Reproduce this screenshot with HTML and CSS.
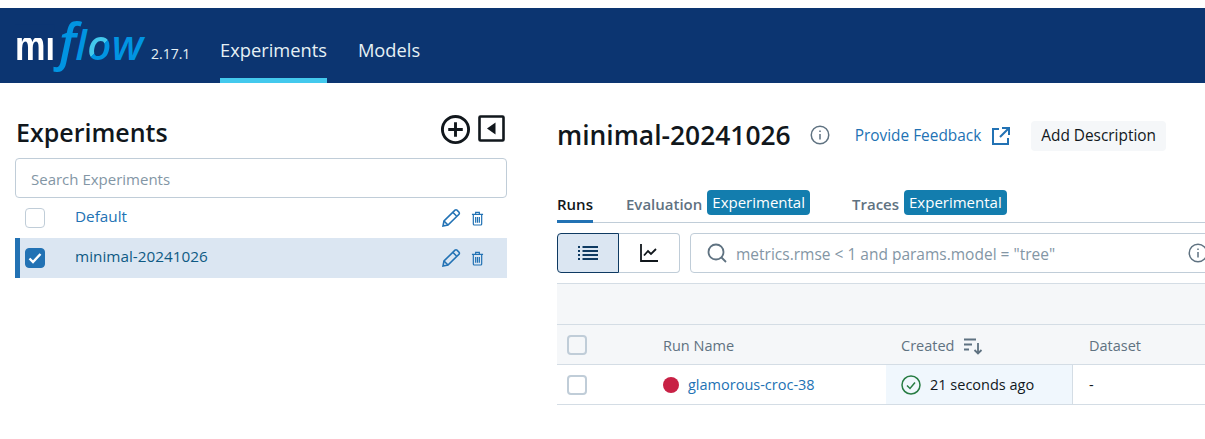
FILE: index.html
```html
<!DOCTYPE html>
<html lang="en">
<head>
  <meta charset="UTF-8" />
  <title>MLflow</title>
  <link rel="stylesheet" href="styles.css">
</head>
<body>
  <header class="topbar">
    <div class="logo">
      <span class="logo-ml">ml</span>
      <span class="logo-flow"><span class="logo-f">f</span>l<span class="logo-o">o</span>w</span>
    </div>
    <span class="version">2.17.1</span>
    <nav class="topnav">
      <a class="topnav-item active">Experiments</a>
      <a class="topnav-item">Models</a>
    </nav>
  </header>

  <div class="page">
    <aside class="sidebar">
      <div class="sidebar-head">
        <h2>Experiments</h2>
        <div class="sidebar-tools">
          <svg width="31" height="31" viewBox="0 0 32 32" fill="none" stroke="#11171c" stroke-width="3"><circle cx="16" cy="16" r="13.5"/><path d="M16 8.500v15M8.500 16h15"/></svg>
          <svg width="28" height="28" viewBox="0 0 28 28"><rect x="1.500" y="1.500" width="24" height="24" rx="1" fill="none" stroke="#11171c" stroke-width="2.600"/><path d="M17.500 7.500v12L9 13.500z" fill="#11171c"/></svg>
        </div>
      </div>
      <div class="search">Search Experiments</div>
      <div class="exp-row">
        <span class="check"></span>
        <span class="exp-name">Default</span>
        <svg class="pencil" width="20" height="20" viewBox="0 0 20 20" fill="none" stroke="#2272b4" stroke-width="1.600"><path d="M2 18l1-5L14 2.200q1-.8 2 0l2 2q.8 1 0 2L7 17z"/><path d="M12 4.500l3.500 3.500M3 13l4 4"/></svg>
        <svg class="trash" width="13" height="15" viewBox="0 0 14 16" fill="none" stroke="#2272b4" stroke-width="1.300"><path d="M1 3.500h12M5 3.500V1.500h4v2M2.500 3.500v10.500q0 1 1 1h7q1 0 1-1V3.500M5 6.500v6M7 6.500v6M9 6.500v6"/></svg>
      </div>
      <div class="exp-row selected">
        <span class="check checked"><svg width="14" height="12" viewBox="0 0 14 12" fill="none" stroke="#fff" stroke-width="2.400"><path d="M1.500 6.500l3.500 3.500 7.500-8"/></svg></span>
        <span class="exp-name">minimal-20241026</span>
        <svg class="pencil" width="20" height="20" viewBox="0 0 20 20" fill="none" stroke="#2272b4" stroke-width="1.600"><path d="M2 18l1-5L14 2.200q1-.8 2 0l2 2q.8 1 0 2L7 17z"/><path d="M12 4.500l3.500 3.500M3 13l4 4"/></svg>
        <svg class="trash" width="13" height="15" viewBox="0 0 14 16" fill="none" stroke="#2272b4" stroke-width="1.300"><path d="M1 3.500h12M5 3.500V1.500h4v2M2.500 3.500v10.500q0 1 1 1h7q1 0 1-1V3.500M5 6.500v6M7 6.500v6M9 6.500v6"/></svg>
      </div>
    </aside>

    <main class="content">
      <div class="title-row">
        <h1>minimal-20241026</h1>
        <svg class="info" width="20" height="20" viewBox="0 0 20 20" fill="none" stroke="#5f7281" stroke-width="1.500"><circle cx="10" cy="10" r="8.750"/><path d="M10 9v5.500M10 5.500v1.600"/></svg>
        <a class="feedback">Provide Feedback</a>
        <svg class="ext" width="20" height="20" viewBox="0 0 20 20" fill="none" stroke="#2272b4" stroke-width="2"><path d="M8 3H2v15h15v-6M11 2h7v7M18 2L9 11"/></svg>
        <span class="add-desc">Add Description</span>
      </div>

      <div class="tabs">
        <span class="tab active">Runs</span>
        <span class="tab tab-eval">Evaluation <b class="tag">Experimental</b></span>
        <span class="tab tab-traces">Traces <b class="tag">Experimental</b></span>
      </div>

      <div class="toolbar">
        <div class="switch">
          <span class="switch-btn on"><svg width="20" height="16" viewBox="0 0 20 16" stroke="#0e3a62" stroke-width="2"><path d="M4.500 2H20M4.500 6H20M4.500 10H20M4.500 14H20M0 2h2M0 6h2M0 10h2M0 14h2"/></svg></span>
          <span class="switch-btn"><svg width="18" height="18" viewBox="0 0 18 18" fill="none" stroke="#11171c" stroke-width="1.800"><path d="M1 0v17h17M4 11.500l4-4.500 3 3 5-5"/></svg></span>
        </div>
        <div class="filter">
          <svg width="20" height="20" viewBox="0 0 20 20" fill="none" stroke="#5f7281" stroke-width="1.800"><circle cx="9" cy="9" r="7.500"/><path d="M14.500 14.500l4.500 4.500"/></svg>
          <span class="filter-text">metrics.rmse &lt; 1 and params.model = "tree"</span>
          <svg class="filter-info" width="20" height="20" viewBox="0 0 20 20" fill="none" stroke="#5f7281" stroke-width="1.500"><circle cx="10" cy="10" r="8.750"/><path d="M10 9v5.500M10 5.500v1.600"/></svg>
        </div>
      </div>

      <div class="table">
        <div class="table-band"></div>
        <div class="tr head">
          <span class="td c-check"><span class="check gray"></span></span>
          <span class="td c-name">Run Name</span>
          <span class="td c-created">Created
            <svg width="20" height="18" viewBox="0 0 20 18" fill="none" stroke="#5f7281" stroke-width="1.800"><path d="M1 2.500h12M1 7.500h8M1 12.500h5M15 6v10.500M11.500 13l3.500 3.500 3.500-3.500"/></svg>
          </span>
          <span class="td c-data">Dataset</span>
        </div>
        <div class="tr">
          <span class="td c-check"><span class="check gray"></span></span>
          <span class="td c-name"><i class="dot"></i><a class="run-link">glamorous-croc-38</a></span>
          <span class="td c-created cell-hl">
            <svg width="20" height="20" viewBox="0 0 20 20" fill="none" stroke="#277c43" stroke-width="1.500"><circle cx="10" cy="10" r="9"/><path d="M6 10.500l3 3 5-6"/></svg>
            <span class="ago">21 seconds ago</span>
          </span>
          <span class="td c-data val">-</span>
        </div>
      </div>
    </main>
  </div>
</body>
</html>
```

FILE: styles.css
```css
* {
  box-sizing: border-box;
  margin: 0;
  padding: 0;
}

html, body {
  height: 100%;
  overflow: hidden;
  background: #fff;
  font-family: "Open Sans", "Noto Sans", sans-serif;
  font-size: 15px;
  color: #11171c;
}

body {
  padding-top: 8px;
}

/* top bar */
.topbar {
  display: flex;
  align-items: center;
  height: 75px;
  padding-left: 15px;
  background: #0c3571;
  color: #e6f1f5;
}

.logo {
  display: flex;
  align-items: flex-start;
  width: 131px;
  height: 75px;
}

.logo-ml {
  position: relative;
  display: block;
  flex: none;
  width: 44px;
  height: 21px;
  margin-top: 30px;
  line-height: 15px;
  font-family: "Liberation Sans", sans-serif;
  font-weight: 700;
  font-size: 38px;
  color: #fff;
  transform: scale(.9, 1.12);
  transform-origin: top left;
}

/* the logo's l is no taller than its m */
.logo-ml::after {
  content: "";
  position: absolute;
  left: 0;
  right: 0;
  bottom: 100%;
  height: 12px;
  background: #0c3571;
}

.logo-flow {
  display: block;
  flex: none;
  height: 75px;
  line-height: 67px;
  font-family: "Open Sans", sans-serif;
  font-style: italic;
  font-weight: 600;
  font-size: 42px;
  letter-spacing: .5px;
  color: #0194e2;
}

.logo-f {
  font-size: 50px;
  letter-spacing: -1px;
}

.logo-o {
  background: linear-gradient(135deg, #43c9ed 55%, #0194e2 55%);
  -webkit-background-clip: text;
  background-clip: text;
  color: transparent;
}

.version {
  width: 74px;
  padding-top: 15px;
  padding-left: 5px;
  font-size: 14px;
}

.topnav {
  display: flex;
  height: 75px;
  gap: 31px;
}

.topnav-item {
  display: flex;
  align-items: center;
  padding-top: 12px;
  border-bottom: 5px solid transparent;
  font-size: 18.300px;
}

.topnav-item.active {
  border-bottom-color: #43c9ed;
}

.page {
  display: flex;
  gap: 50px;
  padding-left: 15px;
}

/* left column */
.sidebar {
  flex: 0 0 492px;
  padding-top: 30px;
}

.sidebar-head {
  display: flex;
  justify-content: space-between;
  align-items: center;
  height: 45px;
  padding-left: 1px;
  padding-right: 1px;
}

.sidebar-head h2 {
  margin-bottom: 7px;
  font-size: 25px;
  font-weight: 600;
}

.sidebar-tools {
  display: flex;
  align-items: center;
  gap: 7px;
  margin-bottom: 13px;
}

.search {
  display: flex;
  align-items: center;
  height: 40px;
  padding-top: 1px;
  padding-left: 15px;
  border: 1px solid #c0cdd8;
  border-radius: 4px;
  font-size: 15px;
  color: #8396a5;
}

.exp-row {
  display: flex;
  align-items: center;
  height: 40px;
  padding-left: 10px;
  color: #2272b4;
}

.exp-row.selected {
  padding-left: 5px;
  border-left: 5px solid #2272b4;
  background: #dbe6f2;
}

.exp-row .exp-name {
  flex: 1;
  margin-left: 30px;
  padding-bottom: 4px;
  font-size: 15.300px;
}

.exp-row.selected .exp-name {
  color: #0e5a84;
}

.check {
  display: inline-flex;
  align-items: center;
  justify-content: center;
  width: 20px;
  height: 20px;
  border: 1px solid #c0cdd8;
  border-radius: 4px;
  background: #fff;
}

.check.checked {
  border-color: #2272b4;
  background: #2272b4;
}

.check.gray {
  border-width: 2px;
  background: transparent;
}

.pencil {
  margin-right: 10px;
}

.trash {
  margin-right: 23px;
}

/* main column */
.content {
  flex: 1;
  min-width: 0;
  overflow: hidden;
  padding-top: 30px;
}

.title-row {
  display: flex;
  align-items: center;
  height: 45px;
}

.title-row h1 {
  padding-bottom: 2px;
  font-size: 26.400px;
  font-weight: 600;
}

.info {
  margin-left: 19px;
  margin-bottom: 2px;
}

.feedback {
  margin-left: 25px;
  font-size: 15.400px;
  color: #2272b4;
}

.ext {
  margin-left: 10px;
}

.add-desc {
  display: flex;
  align-items: center;
  height: 30px;
  margin-left: 20px;
  padding: 0 10px;
  border-radius: 4px;
  background: #f5f7f9;
  font-size: 15.400px;
}

.tabs {
  display: flex;
  align-items: center;
  height: 43px;
  margin-top: 22px;
  border-bottom: 1px solid #c0cdd8;
}

.tab {
  display: flex;
  align-items: center;
  height: 43px;
  padding-top: 6px;
  font-weight: 600;
  font-size: 15px;
  color: #5f7281;
}

.tab.active {
  width: 36px;
  padding-top: 9px;
  border-bottom: 3px solid #2272b4;
  color: #11171c;
}

.tab-eval {
  margin-left: 33px;
}

.tab-traces {
  margin-left: 42px;
}

.tag {
  display: inline-flex;
  align-items: center;
  height: 25px;
  margin-left: 5px;
  margin-top: -4px;
  padding: 0 5px;
  border-radius: 4px;
  background: #137dae;
  color: #fff;
  font-weight: 400;
  font-size: 15px;
}

.toolbar {
  display: flex;
  gap: 10px;
  margin-top: 10px;
}

.switch {
  display: flex;
}

.switch-btn {
  display: flex;
  align-items: center;
  justify-content: center;
  width: 61px;
  height: 40px;
  border: 1px solid #c0cdd8;
  border-left: 0;
  border-radius: 0 4px 4px 0;
}

.switch-btn.on {
  width: 62px;
  border: 1px solid #0e3a62;
  border-radius: 4px 0 0 4px;
  background: #dbe6f2;
}

.filter {
  flex: 1;
  display: flex;
  align-items: center;
  gap: 9px;
  margin-right: -20px;
  height: 40px;
  padding-left: 16px;
  padding-right: 16px;
  border: 1px solid #c0cdd8;
  border-radius: 4px;
  font-size: 15.500px;
  color: #8396a5;
}

.filter-text {
  flex: 1;
  padding-top: 2px;
}

.table {
  margin-top: 10px;
  font-size: 14.500px;
}

.table-band {
  height: 41px;
  border-top: 1px solid #d4dde5;
  background: #f5f7f9;
}

.tr {
  display: flex;
  height: 40px;
  border-bottom: 1px solid #d4dde5;
}

.tr.head {
  height: 41px;
  border-top: 1px solid #d4dde5;
  background: #f5f7f9;
  color: #5f7281;
  font-weight: 500;
}

.td {
  display: flex;
  align-items: center;
}

.tr.head .c-name, .tr.head .c-created, .tr.head .c-data {
  padding-top: 2px;
}

.c-check {
  width: 106px;
  padding-left: 10px;
}

.c-name {
  width: 223px;
}

.c-created {
  width: 187px;
  padding-left: 15px;
  gap: 9px;
}

.cell-hl {
  background: #f0f7fd;
  border-right: 1px solid #d4dde5;
}

.c-data {
  padding-left: 16px;
}

.dot {
  width: 16px;
  height: 16px;
  border-radius: 50%;
  background: #c82145;
}

.run-link {
  margin-left: 9px;
  color: #2272b4;
}
```
